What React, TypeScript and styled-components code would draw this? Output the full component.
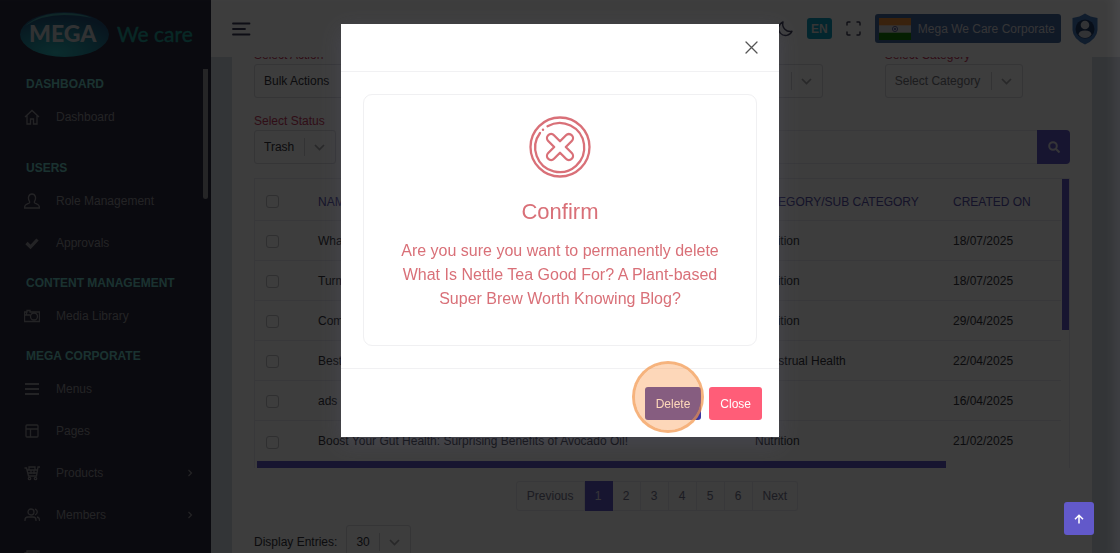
import React from "react";
import styled, { createGlobalStyle, css } from "styled-components";

const primary = "#6259ca";

const GlobalStyle = createGlobalStyle`
  * { box-sizing: border-box; }
  html, body, #root { height: 100%; }
  body {
    margin: 0;
    overflow: hidden;
    background: #d6dbe4;
    color: #35353d;
    font: 12px/18px "Liberation Sans", Arial, sans-serif;
  }
  button, input, select { font: inherit; color: inherit; margin: 0; }
  h2, h3, p, ul, nav { margin: 0; padding: 0; }
`;

const Shell = styled.div`
  display: flex;
  height: 100vh;
  overflow: hidden;
`;

const Sidebar = styled.aside`
  width: 211px;
  flex: none;
  background: #2d2a3e;
  color: #94949c;
  overflow: hidden;
  display: flex;
  flex-direction: column;
`;

const Brand = styled.a`
  display: block;
  height: 69px;
  flex: none;
  padding: 11px 0 0 19px;
`;

const MenuArea = styled.div`
  display: flex;
  flex: 1;
  min-height: 0;
`;

const Menu = styled.nav`
  flex: 1;
  overflow: hidden;
`;

const MenuThumb = styled.div`
  width: 5px;
  height: 130px;
  margin: 0 3px 0 -8px;
  background: #9a9a9e;
  border-radius: 0 0 3px 3px;
`;

const MenuHeading = styled.h3<{ $gap: number }>`
  font-size: 12px;
  line-height: 16px;
  font-weight: 700;
  color: #6ed2ca;
  padding-left: 26px;
  margin-top: ${(p) => p.$gap}px;
  margin-bottom: 4px;
`;

const MenuList = styled.ul`
  list-style: none;
`;

const MenuLink = styled.a`
  display: flex;
  align-items: center;
  height: 42px;
  padding: 0 16px 0 24px;
  gap: 16px;
  color: inherit;
  text-decoration: none;
  span { flex: 1; }
`;

const Main = styled.main`
  flex: 1;
  min-width: 0;
  display: flex;
  flex-direction: column;
`;

const TopBar = styled.header`
  position: relative;
  z-index: 1;
  flex: none;
  height: 57px;
  display: flex;
  align-items: center;
  padding: 0 22px 0 20px;
  background: #fcfcfc;
`;

const IconButton = styled.button`
  display: flex;
  padding: 0;
  border: 0;
  background: none;
  color: #3c3c58;
`;

const TopActions = styled.div`
  display: flex;
  align-items: center;
  margin-left: auto;
`;

const LangButton = styled.button`
  width: 25px;
  height: 21px;
  margin: 0 14px;
  padding: 0;
  border: 0;
  border-radius: 3px;
  background: #0f9dc0;
  color: #dcdcdc;
  font-weight: 700;
`;

const SiteButton = styled.button`
  display: flex;
  align-items: center;
  gap: 7px;
  height: 29px;
  margin: 0 11px 0 14px;
  padding: 0 6px 0 4px;
  border: 0;
  border-radius: 3px;
  background: #45699f;
  color: #dcdce0;
`;

const Card = styled.section`
  flex: none;
  margin: -11px 28px 0 21px;
  padding: 0 22px 30px;
  background: #fcfcfc;
`;

const FilterRow = styled.div`
  display: grid;
  grid-template-columns: repeat(4, 1fr);
  column-gap: 25px;
`;

const FieldLabel = styled.label`
  display: block;
  line-height: 18px;
  color: #c83a60;
`;

const SelectBox = styled.div<{ $width: number }>`
  position: relative;
  width: ${(p) => p.$width}px;
  select {
    appearance: none;
    display: block;
    width: 100%;
    height: 34px;
    padding: 0 34px 0 9px;
    border: 1px solid #dcdce2;
    border-radius: 3px;
    background: transparent;
  }
  svg {
    position: absolute;
    right: 0;
    top: 0;
    pointer-events: none;
    color: #a8a8ac;
  }
`;

const MutedSelectBox = styled(SelectBox)`
  color: #77777c;
`;

const SearchRow = styled.div`
  display: flex;
  align-items: flex-end;
  gap: 12px;
  margin-top: 14px;
`;

const SearchForm = styled.form`
  flex: 1;
  display: flex;
  height: 34px;
  input {
    flex: 1;
    min-width: 0;
    padding: 0 9px;
    border: 1px solid #eaeaf0;
    border-right: 0;
    border-radius: 3px 0 0 3px;
    background: transparent;
  }
  button {
    width: 33px;
    padding: 0;
    border: 0;
    border-radius: 0 4px 4px 0;
    background: ${primary};
    color: #dcdce6;
    display: flex;
    align-items: center;
    justify-content: center;
  }
`;

const TableFrame = styled.div`
  display: grid;
  grid-template-columns: 1fr 8px;
  margin-top: 14px;
  border: 1px solid #eaeaf0;
  border-bottom: 0;
`;

const Table = styled.table`
  width: 100%;
  table-layout: fixed;
  border-collapse: separate;
  border-spacing: 0;
  th, td {
    height: 40px;
    padding: 0;
    text-align: left;
    font-weight: 400;
    white-space: nowrap;
    border-bottom: 1px solid #eaeaf0;
  }
  th { height: 42px; color: #5751ac; padding-top: 4px; }
  tr:last-child td { border-bottom: 0; }
  th:first-child, td:first-child { padding-left: 11px; }
  td:first-child { padding-top: 2px; }
  input {
    appearance: none;
    display: block;
    width: 13px;
    height: 13px;
    border: 1px solid #c4c4ca;
    border-radius: 3px;
  }
`;

const Column = styled.col<{ $width?: number }>`
  width: ${(p) => (p.$width ? `${p.$width}px` : "auto")};
`;

const VerticalThumb = styled.div`
  width: 7px;
  height: 151px;
  justify-self: end;
  background: ${primary};
`;

const HorizontalTrack = styled.div`
  grid-column: 1 / -1;
  padding: 0 123px 0 2px;
  div { height: 7px; background: ${primary}; }
`;

const Pager = styled.nav`
  display: flex;
  justify-content: center;
  margin: 13px 10px 0 0;
`;

const PageButton = styled.button<{ $current?: boolean; $wide?: boolean }>`
  height: 30px;
  min-width: 28px;
  padding: 0 ${(p) => (p.$wide ? 10 : 0)}px;
  border: 1px solid #eaeaf0;
  border-left-width: 0;
  background: transparent;
  color: #77768f;
  &:first-child { border-left-width: 1px; border-radius: 3px 0 0 3px; }
  &:last-child { border-radius: 0 3px 3px 0; }
  ${(p) => p.$current && css`
    background: ${primary};
    border-color: ${primary};
    color: #e0e0ea;
  `}
`;

const EntriesRow = styled.div`
  display: flex;
  align-items: center;
  gap: 9px;
  margin-top: 14px;
`;

const Backdrop = styled.div`
  position: fixed;
  inset: 0;
  z-index: 10;
  display: flex;
  align-items: flex-start;
  justify-content: center;
  padding-top: 24px;
  background: rgba(0, 0, 0, 0.76);
  box-shadow: inset -12px 0 10px -6px rgba(150, 150, 165, 0.12);
`;

const Dialog = styled.div`
  width: 438px;
  max-width: 100%;
  background: #fff;
  box-shadow: 0 6px 20px rgba(90, 90, 120, 0.3);
`;

const DialogHeader = styled.div`
  display: flex;
  align-items: center;
  justify-content: flex-end;
  height: 48px;
  padding-right: 21px;
  border-bottom: 1px solid #f1f1f3;
`;

const DialogBody = styled.div`
  padding: 22px;
`;

const ConfirmCard = styled.div`
  padding: 21px 30px 34px;
  border: 1px solid #f0f0f2;
  border-radius: 9px;
  text-align: center;
  color: #d97078;
  svg { display: block; margin: 0 auto 20px; }
  h2 {
    font-size: 22px;
    line-height: 28px;
    font-weight: 400;
    margin-bottom: 13px;
  }
  p { font-size: 16px; line-height: 24px; }
`;

const DialogFooter = styled.div`
  display: flex;
  justify-content: flex-end;
  gap: 8px;
  padding: 18px 17px 17px;
  border-top: 1px solid #f1f1f3;
`;

const ActionButton = styled.button<{ $tone: string }>`
  height: 33px;
  padding: 0 11px;
  border: 0;
  border-radius: 3px;
  background: ${(p) => p.$tone};
  color: #fff;
`;

const ClickTarget = styled.span`
  position: relative;
  display: flex;
`;

const ClickMarker = styled.span`
  position: absolute;
  left: 50%;
  top: 50%;
  width: 72px;
  height: 72px;
  margin: -43px 0 0 -41px;
  border: 3px solid rgba(243, 150, 75, 0.72);
  border-radius: 50%;
  background: rgba(250, 155, 80, 0.4);
  background-clip: padding-box;
  pointer-events: none;
`;

const TopLink = styled.a`
  position: fixed;
  right: 26px;
  bottom: 18px;
  z-index: 11;
  width: 30px;
  height: 33px;
  display: flex;
  align-items: center;
  justify-content: center;
  border-radius: 3px;
  background: ${primary};
  color: #fff;
`;

const BrandText = styled.text`
  font-family: Lato, sans-serif;
`;

function Logo() {
  return (
    <svg width="176" height="48" viewBox="0 0 176 48" role="img" aria-label="Mega We care">
      <defs>
        <radialGradient id="oval" cx="0.4" cy="0.9" r="0.8">
          <stop offset="0" stopColor="#2fb8bc" />
          <stop offset="0.55" stopColor="#22869c" />
          <stop offset="1" stopColor="#25557e" />
        </radialGradient>
      </defs>
      <ellipse cx="45.500" cy="23.500" rx="44.500" ry="22.500" fill="url(#oval)" />
      <path d="M6 15Q20 2 45 2Q62 2 73 7Q60 4 45 4Q22 4 6 15Z" fill="#3f9fa4" />
      <BrandText x="10" y="31" fontSize="23" fontWeight="900" fill="#cdd2d6">MEGA</BrandText>
      <BrandText x="98" y="31" fontSize="21" fill="#22a89e" stroke="#22a89e" strokeWidth="0.400">We care</BrandText>
    </svg>
  );
}

const icons: Record<string, React.ReactNode> = {
  home: <path d="M1 8 8 1.500 15 8M3 6.500V15H6.500V10H9.500V15H13V6.500" />,
  user: <path d="M5.500 8.500C3.500 5 4.500 1 8 1S12.500 5 10.500 8.500C10 10 11 10.500 13 11Q15.500 12 15.500 15H.5Q.5 12 3 11C5 10.500 6 10 5.500 8.500Z" />,
  check: <path d="M2.500 8 6.500 12 13.500 4.500" strokeWidth="3.200" />,
  camera: <><path d="M.5 4H3V2.500H6V4H15.500V13.500H.5ZM1 7H6M2.500 4V7" /><circle cx="10" cy="8.500" r="3.500" /></>,
  menu: <path d="M1 3H15M1 8H15M1 13H15" strokeWidth="1.800" />,
  layout: <><rect x="2" y="2" width="12" height="12" rx="1" /><path d="M2 6H14M6.500 6V14" /></>,
  cart: <><path d="M.5 3H2.500L4.500 11H12.500L14 2H16M3 5H13M4 8H13M5 5V2H11V5M7 5V9M10 5V9" /><circle cx="5.500" cy="13.500" r="1.200" /><circle cx="11.500" cy="13.500" r="1.200" /></>,
  users: <><circle cx="7" cy="5" r="3" /><path d="M1 14V13Q1 10 4 10H9Q12 10 12 13V14M11 2.200Q13.500 3 13.200 5.200 13 7.200 11 8M13 10Q15.500 10.500 15.500 13V14" /></>,
  card: <path d="M3 4V2H15V12H13M1 4H13V14H1Z" />,
};

function MenuIcon({ name }: { name: string }) {
  return (
    <svg width="16" height="16" viewBox="0 0 16 16" fill="none" stroke="currentColor" strokeWidth="1.300" aria-hidden="true">
      {icons[name]}
    </svg>
  );
}

function MenuItem({ icon, label, nested, iconOnly }: { icon: string; label: string; nested?: boolean; iconOnly?: boolean }) {
  return (
    <li>
      <MenuLink href="#" aria-label={iconOnly ? label : undefined}>
        <MenuIcon name={icon} />
        {!iconOnly && <span>{label}</span>}
        {nested && (
          <svg width="10" height="10" viewBox="0 0 10 10" fill="none" stroke="currentColor" strokeWidth="1.200" aria-hidden="true">
            <path d="M3.500 2 6.500 5 3.500 8" />
          </svg>
        )}
      </MenuLink>
    </li>
  );
}

function SelectField({ id, value, width, muted, label }: { id: string; value: string; width: number; muted?: boolean; label?: string }) {
  const Box = muted ? MutedSelectBox : SelectBox;
  return (
    <div>
      {label && <FieldLabel htmlFor={id}>{label}</FieldLabel>}
      <Box $width={width}>
        <select id={id} defaultValue={value}>
          <option>{value}</option>
        </select>
        <svg width="33" height="34" viewBox="0 0 33 34" fill="none" aria-hidden="true">
          <path d="M1.500 8V26" stroke="#d4d4d8" />
          <path d="M12 15 16.500 19.500 21 15" stroke="currentColor" strokeWidth="1.700" />
        </svg>
      </Box>
    </div>
  );
}

const rows = [
  ["What Is Nettle", "Nutrition", "18/07/2025"],
  ["Turmeric", "Nutrition", "18/07/2025"],
  ["Common", "Nutrition", "29/04/2025"],
  ["Best", "Menstrual Health", "22/04/2025"],
  ["ads", "", "16/04/2025"],
  ["Boost Your Gut Health: Surprising Benefits of Avocado Oil!", "Nutrition", "21/02/2025"],
];

function ConfirmIcon() {
  return (
    <svg width="62" height="62" viewBox="0 0 62 62" fill="none" stroke="currentColor" strokeWidth="2.300" strokeLinecap="round" aria-hidden="true">
      <circle cx="31" cy="31" r="29.500" />
      <path d="M18.500 10.300A24.500 24.500 0 1 1 11 17" />
      <circle cx="14" cy="13.800" r="1.200" fill="currentColor" stroke="none" />
      <path strokeLinejoin="round" d="M31 25.200 37 19.200A4 4 0 0 1 42.800 25L36.800 31 42.800 37A4 4 0 0 1 37 42.800L31 36.800 25 42.800A4 4 0 0 1 19.200 37L25.200 31 19.200 25A4 4 0 0 1 25 19.200Z" />
    </svg>
  );
}

function Flag() {
  return (
    <svg width="32" height="22" viewBox="0 0 32 22" aria-hidden="true">
      <rect width="32" height="22" fill="#d8d8d8" />
      <rect width="32" height="7.300" fill="#ee8f38" />
      <rect y="14.700" width="32" height="7.300" fill="#168008" />
      <circle cx="16" cy="11" r="2.600" fill="none" stroke="#4a4a90" strokeWidth="0.800" />
      <circle cx="16" cy="11" r="1" fill="#4a4a90" />
    </svg>
  );
}

function Avatar() {
  return (
    <svg width="26" height="32" viewBox="0 0 26 32" aria-hidden="true">
      <path d="M13 .5Q18 4 25.500 5V17Q25 26 13 31.500Q1 26 .5 17V5Q8 4 13 .5Z" fill="#4678bc" />
      <circle cx="13" cy="16" r="9.500" fill="#203a66" />
      <circle cx="13" cy="12" r="4.300" fill="#d0d4dc" />
      <path d="M6.500 21.500Q7 17.500 13 17.500T19.500 21.500Q17 25 13 25T6.500 21.500Z" fill="#d0d4dc" />
    </svg>
  );
}

export default function App() {
  return (
    <>
      <GlobalStyle />
      <Shell>
        <Sidebar>
          <Brand href="#"><Logo /></Brand>
          <MenuArea>
            <Menu aria-label="Main menu">
              <MenuHeading $gap={7}>DASHBOARD</MenuHeading>
              <MenuList><MenuItem icon="home" label="Dashboard" /></MenuList>
              <MenuHeading $gap={22}>USERS</MenuHeading>
              <MenuList>
                <MenuItem icon="user" label="Role Management" />
                <MenuItem icon="check" label="Approvals" />
              </MenuList>
              <MenuHeading $gap={11}>CONTENT MANAGEMENT</MenuHeading>
              <MenuList><MenuItem icon="camera" label="Media Library" /></MenuList>
              <MenuHeading $gap={11}>MEGA CORPORATE</MenuHeading>
              <MenuList>
                <MenuItem icon="menu" label="Menus" />
                <MenuItem icon="layout" label="Pages" />
                <MenuItem icon="cart" label="Products" nested />
                <MenuItem icon="users" label="Members" nested />
                <MenuItem icon="card" label="Blogs" iconOnly />
              </MenuList>
            </Menu>
            <MenuThumb />
          </MenuArea>
        </Sidebar>

        <Main>
          <TopBar>
            <IconButton aria-label="Toggle menu">
              <svg width="20" height="14" viewBox="0 0 20 14" stroke="currentColor" strokeWidth="1.800" strokeLinecap="round" aria-hidden="true">
                <path d="M2 1.500H18.500M2 7H14M2 12.500H18.500" />
              </svg>
            </IconButton>
            <TopActions>
              <IconButton aria-label="Dark mode">
                <svg width="16" height="16" viewBox="0 0 16 16" fill="none" stroke="currentColor" strokeWidth="1.400" strokeLinejoin="round" aria-hidden="true">
                  <path d="M6 1A7 7 0 1 0 15 10.300 7.500 7.500 0 0 1 6 1Z" />
                </svg>
              </IconButton>
              <LangButton>EN</LangButton>
              <IconButton aria-label="Full screen">
                <svg width="15" height="15" viewBox="0 0 15 15" fill="none" stroke="currentColor" strokeWidth="1.400" strokeLinecap="round" aria-hidden="true">
                  <path d="M1 4V2Q1 1 2 1H4M11 1H13Q14 1 14 2V4M14 11V13Q14 14 13 14H11M4 14H2Q1 14 1 13V11" />
                </svg>
              </IconButton>
              <SiteButton><Flag />Mega We Care Corporate</SiteButton>
              <IconButton aria-label="Profile"><Avatar /></IconButton>
            </TopActions>
          </TopBar>

          <Card>
            <FilterRow>
              <SelectField id="action" label="Select Action" value="Bulk Actions" width={138} />
              <SelectField id="language" label="Select Language" value="Select Language" width={138} muted />
              <SelectField id="country" label="Select Company" value="Select Company" width={148} muted />
              <SelectField id="category" label="Select Category" value="Select Category" width={138} muted />
            </FilterRow>
            <SearchRow>
              <SelectField id="status" label="Select Status" value="Trash" width={82} />
              <SearchForm onSubmit={(e) => e.preventDefault()}>
                <input type="search" aria-label="Search" />
                <button aria-label="Search">
                  <svg width="12" height="12" viewBox="0 0 12 12" fill="none" stroke="currentColor" strokeWidth="2" aria-hidden="true">
                    <circle cx="5" cy="5" r="3.800" />
                    <path d="M7.800 7.800 11.500 11.500" />
                  </svg>
                </button>
              </SearchForm>
            </SearchRow>

            <TableFrame>
              <Table>
                <colgroup>
                  <Column $width={63} />
                  <Column />
                  <Column $width={198} />
                  <Column $width={108} />
                </colgroup>
                <thead>
                  <tr>
                    <th><input type="checkbox" aria-label="Select all" /></th>
                    <th>NAME</th>
                    <th>CATEGORY/SUB CATEGORY</th>
                    <th>CREATED ON</th>
                  </tr>
                </thead>
                <tbody>
                  {rows.map(([name, category, date]) => (
                    <tr key={name}>
                      <td><input type="checkbox" aria-label={name} /></td>
                      <td>{name}</td>
                      <td>{category}</td>
                      <td>{date}</td>
                    </tr>
                  ))}
                </tbody>
              </Table>
              <VerticalThumb />
              <HorizontalTrack><div /></HorizontalTrack>
            </TableFrame>

            <Pager aria-label="Pages">
              <PageButton $wide>Previous</PageButton>
              <PageButton $current>1</PageButton>
              {[2, 3, 4, 5, 6].map((n) => <PageButton key={n}>{n}</PageButton>)}
              <PageButton $wide>Next</PageButton>
            </Pager>

            <EntriesRow>
              <label htmlFor="entries">Display Entries:</label>
              <SelectField id="entries" value="30" width={65} />
            </EntriesRow>
          </Card>
        </Main>
      </Shell>

      <Backdrop>
        <Dialog role="dialog" aria-modal="true" aria-labelledby="confirm-title">
          <DialogHeader>
            <IconButton aria-label="Close dialog">
              <svg width="13" height="13" viewBox="0 0 13 13" stroke="#555" strokeWidth="1.300" strokeLinecap="round" aria-hidden="true">
                <path d="M1 1 12 12M12 1 1 12" />
              </svg>
            </IconButton>
          </DialogHeader>
          <DialogBody>
            <ConfirmCard>
              <ConfirmIcon />
              <h2 id="confirm-title">Confirm</h2>
              <p>Are you sure you want to permanently delete What Is Nettle Tea Good For? A Plant-based Super Brew Worth Knowing Blog?</p>
            </ConfirmCard>
          </DialogBody>
          <DialogFooter>
            <ClickTarget>
              <ActionButton $tone="#3a35a0">Delete</ActionButton>
              <ClickMarker />
            </ClickTarget>
            <ActionButton $tone="#ff5d78">Close</ActionButton>
          </DialogFooter>
        </Dialog>
      </Backdrop>
      <TopLink href="#" aria-label="Back to top">
        <svg width="10" height="10" viewBox="0 0 10 10" fill="none" stroke="currentColor" strokeWidth="1.500" aria-hidden="true">
          <path d="M5 9.500V1.500M1 5.200 5 1.200 9 5.200" />
        </svg>
      </TopLink>
    </>
  );
}
